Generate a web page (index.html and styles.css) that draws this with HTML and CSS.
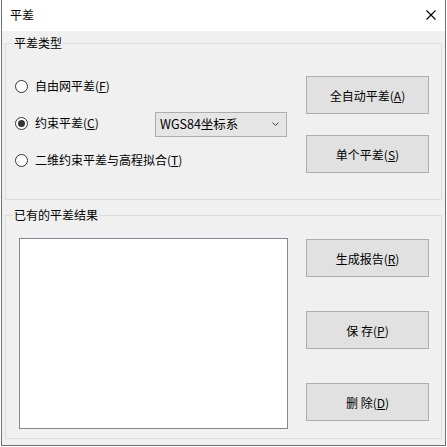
FILE: index.html
```html
<!DOCTYPE html>
<html lang="zh-CN">
<head>
    <meta charset="UTF-8">
    <title>平差</title>
    <link rel="stylesheet" href="styles.css">
</head>
<body>
    <div class="window">
        <div class="title-bar">
            <span class="title">平差</span>
            <svg class="close" width="10" height="10" viewBox="0 0 10 10">
                <path d="M0.5 0.5 L9.5 9.5 M9.5 0.5 L0.5 9.5" stroke="#000" stroke-width="1.1" fill="none"/>
            </svg>
        </div>

        <div class="client">
            <div class="group group-type">
                <span class="group-title">平差类型</span>
                <div class="radios">
                    <div class="radio-row">
                        <span class="radio"></span>
                        <span>自由网平差(<u>F</u>)</span>
                    </div>
                    <div class="radio-row">
                        <span class="radio checked"></span>
                        <span class="radio-label">约束平差(<u>C</u>)</span>
                        <div class="combo">
                            <span>WGS84坐标系</span>
                            <svg width="7" height="4" viewBox="0 0 7 4">
                                <path d="M0.5 0.5 L3.5 3.5 L6.5 0.5" stroke="#444" stroke-width="1" fill="none"/>
                            </svg>
                        </div>
                    </div>
                    <div class="radio-row">
                        <span class="radio"></span>
                        <span>二维约束平差与高程拟合(<u>T</u>)</span>
                    </div>
                </div>
                <div class="buttons buttons-top">
                    <button class="btn">全自动平差(<u>A</u>)</button>
                    <button class="btn">单个平差(<u>S</u>)</button>
                </div>
            </div>

            <div class="group group-result">
                <span class="group-title">已有的平差结果</span>
                <div class="listbox"></div>
                <div class="buttons buttons-bottom">
                    <button class="btn">生成报告(<u>R</u>)</button>
                    <button class="btn">保&nbsp;存(<u>P</u>)</button>
                    <button class="btn">删&nbsp;除(<u>D</u>)</button>
                </div>
            </div>
        </div>
    </div>
</body>
</html>
```

FILE: styles.css
```css
body {
    margin: 0;
    background-color: #ffffff;
    font-family: "Noto Sans CJK SC", "Noto Sans", sans-serif;
    font-size: 12px;
    line-height: 16px;
    color: #000;
}
.window {
    margin-left: 1px;
    width: 443px;
    height: 445px;
    border: 1px solid #707070;
    border-top: 0;
    display: flex;
    flex-direction: column;
}
.title-bar {
    height: 31px;
    background-color: #fff;
    display: flex;
    align-items: center;
    justify-content: space-between;
    padding: 0 9px 0 8px;
}
.title {
    margin-top: -1px;
}
.close {
    margin-top: -1px;
}
.client {
    flex: 1;
    background-color: #f0f0f0;
    padding: 12px 3px 0 3px;
}
.group {
    position: relative;
    border: 1px solid #dcdcdc;
    display: flex;
    justify-content: space-between;
}
.group-title {
    position: absolute;
    top: -9px;
    left: 7px;
    padding: 0 1px;
    background-color: #f0f0f0;
}
.group-type {
    height: 155px;
    padding: 0 12px 0 9px;
}
.group-result {
    margin-top: 15px;
    height: 222px;
    padding: 0 12px 0 13px;
}
.radios {
    padding-top: 30px;
    display: flex;
    flex-direction: column;
    gap: 13px;
}
.radio-row {
    height: 24px;
    display: flex;
    align-items: center;
}
.radio {
    width: 11px;
    height: 11px;
    border: 1px solid #333;
    border-radius: 50%;
    background-color: #fff;
    margin-right: 7px;
    display: flex;
    align-items: center;
    justify-content: center;
}
.radio.checked::after {
    content: "";
    width: 7px;
    height: 7px;
    border-radius: 50%;
    background-color: #333;
}
.radio-label {
    width: 120px;
}
.combo {
    box-sizing: border-box;
    width: 132px;
    height: 25px;
    margin-top: 2px;
    border: 1px solid #adadad;
    background-color: #e5e5e5;
    display: flex;
    align-items: center;
    justify-content: space-between;
    padding: 0 7px 0 4px;
    font-size: 12.5px;
}
.buttons {
    display: flex;
    flex-direction: column;
}
.buttons-top {
    padding-top: 32px;
    gap: 21px;
}
.buttons-bottom {
    padding-top: 23px;
    gap: 34px;
}
.btn {
    width: 123px;
    height: 38px;
    border: 1px solid #adadad;
    background-color: #e1e1e1;
    font-family: inherit;
    font-size: 12px;
    color: #000;
    padding: 0;
}
.listbox {
    margin-top: 22px;
    width: 267px;
    height: 189px;
    border: 1px solid #828790;
    background-color: #fff;
}
u {
    text-underline-offset: 1px;
}
```
